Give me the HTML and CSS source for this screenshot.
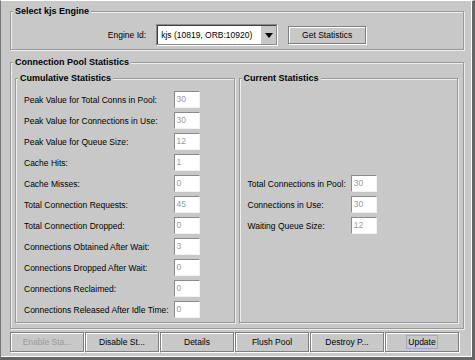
FILE: index.html
```html
<!DOCTYPE html>
<html lang="en">
<head>
  <meta charset="UTF-8" />
  <title>Connection Pool Statistics</title>
  <link rel="stylesheet" href="styles.css">
</head>
<body>
  <div class="frame">
    <fieldset class="group engine-group">
      <legend>Select kjs Engine</legend>
      <div class="engine-row">
        <span class="engine-label">Engine Id:</span>
        <div class="combo">
          <span class="combo-value">kjs (10819, ORB:10920)</span>
          <span class="combo-arrow"><span class="triangle"></span></span>
        </div>
        <button class="btn get-btn">Get Statistics</button>
      </div>
    </fieldset>

    <fieldset class="group pool-group">
      <legend>Connection Pool Statistics</legend>
      <div class="pool-columns">
        <fieldset class="group stats-group">
          <legend>Cumulative Statistics</legend>
          <div class="stats-grid">
            <span>Peak Value for Total Conns in Pool:</span><span class="field">30</span>
            <span>Peak Value for Connections in Use:</span><span class="field">30</span>
            <span>Peak Value for Queue Size:</span><span class="field">12</span>
            <span>Cache Hits:</span><span class="field">1</span>
            <span>Cache Misses:</span><span class="field">0</span>
            <span>Total Connection Requests:</span><span class="field">45</span>
            <span>Total Connection Dropped:</span><span class="field">0</span>
            <span>Connections Obtained After Wait:</span><span class="field">3</span>
            <span>Connections Dropped After Wait:</span><span class="field">0</span>
            <span>Connections Reclaimed:</span><span class="field">0</span>
            <span>Connections Released After Idle Time:</span><span class="field">0</span>
          </div>
        </fieldset>

        <fieldset class="group stats-group current">
          <legend>Current Statistics</legend>
          <div class="stats-grid">
            <span>Total Connections in Pool:</span><span class="field">30</span>
            <span>Connections in Use:</span><span class="field">30</span>
            <span>Waiting Queue Size:</span><span class="field">12</span>
          </div>
        </fieldset>
      </div>
    </fieldset>

    <div class="actions">
      <button class="btn" disabled>Enable Sta...</button>
      <button class="btn">Disable St...</button>
      <button class="btn">Details</button>
      <button class="btn">Flush Pool</button>
      <button class="btn">Destroy P...</button>
      <button class="btn"><span class="focus">Update</span></button>
    </div>
  </div>
</body>
</html>
```

FILE: styles.css
```css
body {
  margin: 0;
  font-family: "Liberation Sans", Arial, sans-serif;
  font-size: 8.5px;
  color: #000;
  background: #c8c8c8;
}

.frame {
  width: 475px;
  height: 360px;
  box-sizing: border-box;
  background: #c8c8c8;
  border-style: solid;
  border-width: 1px 3px 3px 1px;
  border-color: #fff #666 #666 #777;
  box-shadow: inset -1px -1px 0 #fff;
  padding: 4px 8px 0 9px;
}

.group {
  margin: 0;
  padding: 0;
  min-width: 0;
  border: 1px solid #999;
  box-shadow: inset 1px 1px 0 #eee, 1px 1px 0 #eee;
}

.group legend {
  margin-left: 2px;
  padding: 0 2px;
  font-size: 9px;
  font-weight: bold;
  line-height: 13px;
  background: #c8c8c8;
}

.engine-row {
  display: flex;
  justify-content: center;
  align-items: flex-end;
  padding: 6px 0 4px;
}

.engine-label {
  align-self: center;
  margin-right: 10px;
}

.combo {
  width: 121px;
  height: 21px;
  box-sizing: border-box;
  display: flex;
  background: #fff;
  border: 1px solid #8a8a8a;
  box-shadow: inset 1px 1px 0 #404040, 1px 1px 0 #fff;
  padding: 1px 0 0 1px;
  margin-right: 11px;
}

.combo-value {
  flex: 1;
  padding-left: 3px;
  line-height: 18px;
  white-space: nowrap;
  overflow: hidden;
}

.combo-arrow {
  width: 15px;
  display: flex;
  align-items: center;
  justify-content: center;
  background: #c8c8c8;
  border-left: 1px solid #fff;
}

.triangle {
  width: 0;
  height: 0;
  border-left: 4px solid transparent;
  border-right: 4px solid transparent;
  border-top: 5px solid #000;
}

.btn {
  font-family: inherit;
  font-size: 8.5px;
  color: #000;
  background: #c8c8c8;
  border: 1px solid #7f7f7f;
  box-shadow: inset 1px 1px 0 #fff, 1px 1px 0 #fff;
  padding: 0;
  border-radius: 0;
}

.btn:disabled {
  color: #9a9a9a;
}

.get-btn {
  width: 78px;
  height: 18px;
  margin-bottom: 1px;
}

.pool-group {
  margin-top: 6px;
}

.pool-columns {
  display: grid;
  grid-template-columns: 1fr 1fr;
  gap: 4px;
  padding: 3px 5px 5px 4px;
}

.stats-grid {
  display: grid;
  grid-template-columns: max-content 26px;
  column-gap: 5px;
  row-gap: 4px;
  align-items: center;
  justify-content: start;
  padding: 6px 0 4px 8px;
}

.stats-grid span {
  white-space: nowrap;
}

.current {
  display: flex;
  flex-direction: column;
  justify-content: center;
}

.stats-grid .field {
  height: 17px;
  box-sizing: border-box;
  background: #fff;
  border: 1px solid;
  border-color: #8a8a8a #f2f2f2 #f2f2f2 #8a8a8a;
  color: #9a9a9a;
  padding-left: 2px;
  line-height: 15px;
}

.actions {
  display: grid;
  grid-template-columns: repeat(6, 75px);
  margin-top: 3px;
}

.actions .btn {
  height: 20px;
  width: 74px;
}

.focus {
  outline: 1px solid #9fa8d0;
  outline-offset: 1px;
}
```
